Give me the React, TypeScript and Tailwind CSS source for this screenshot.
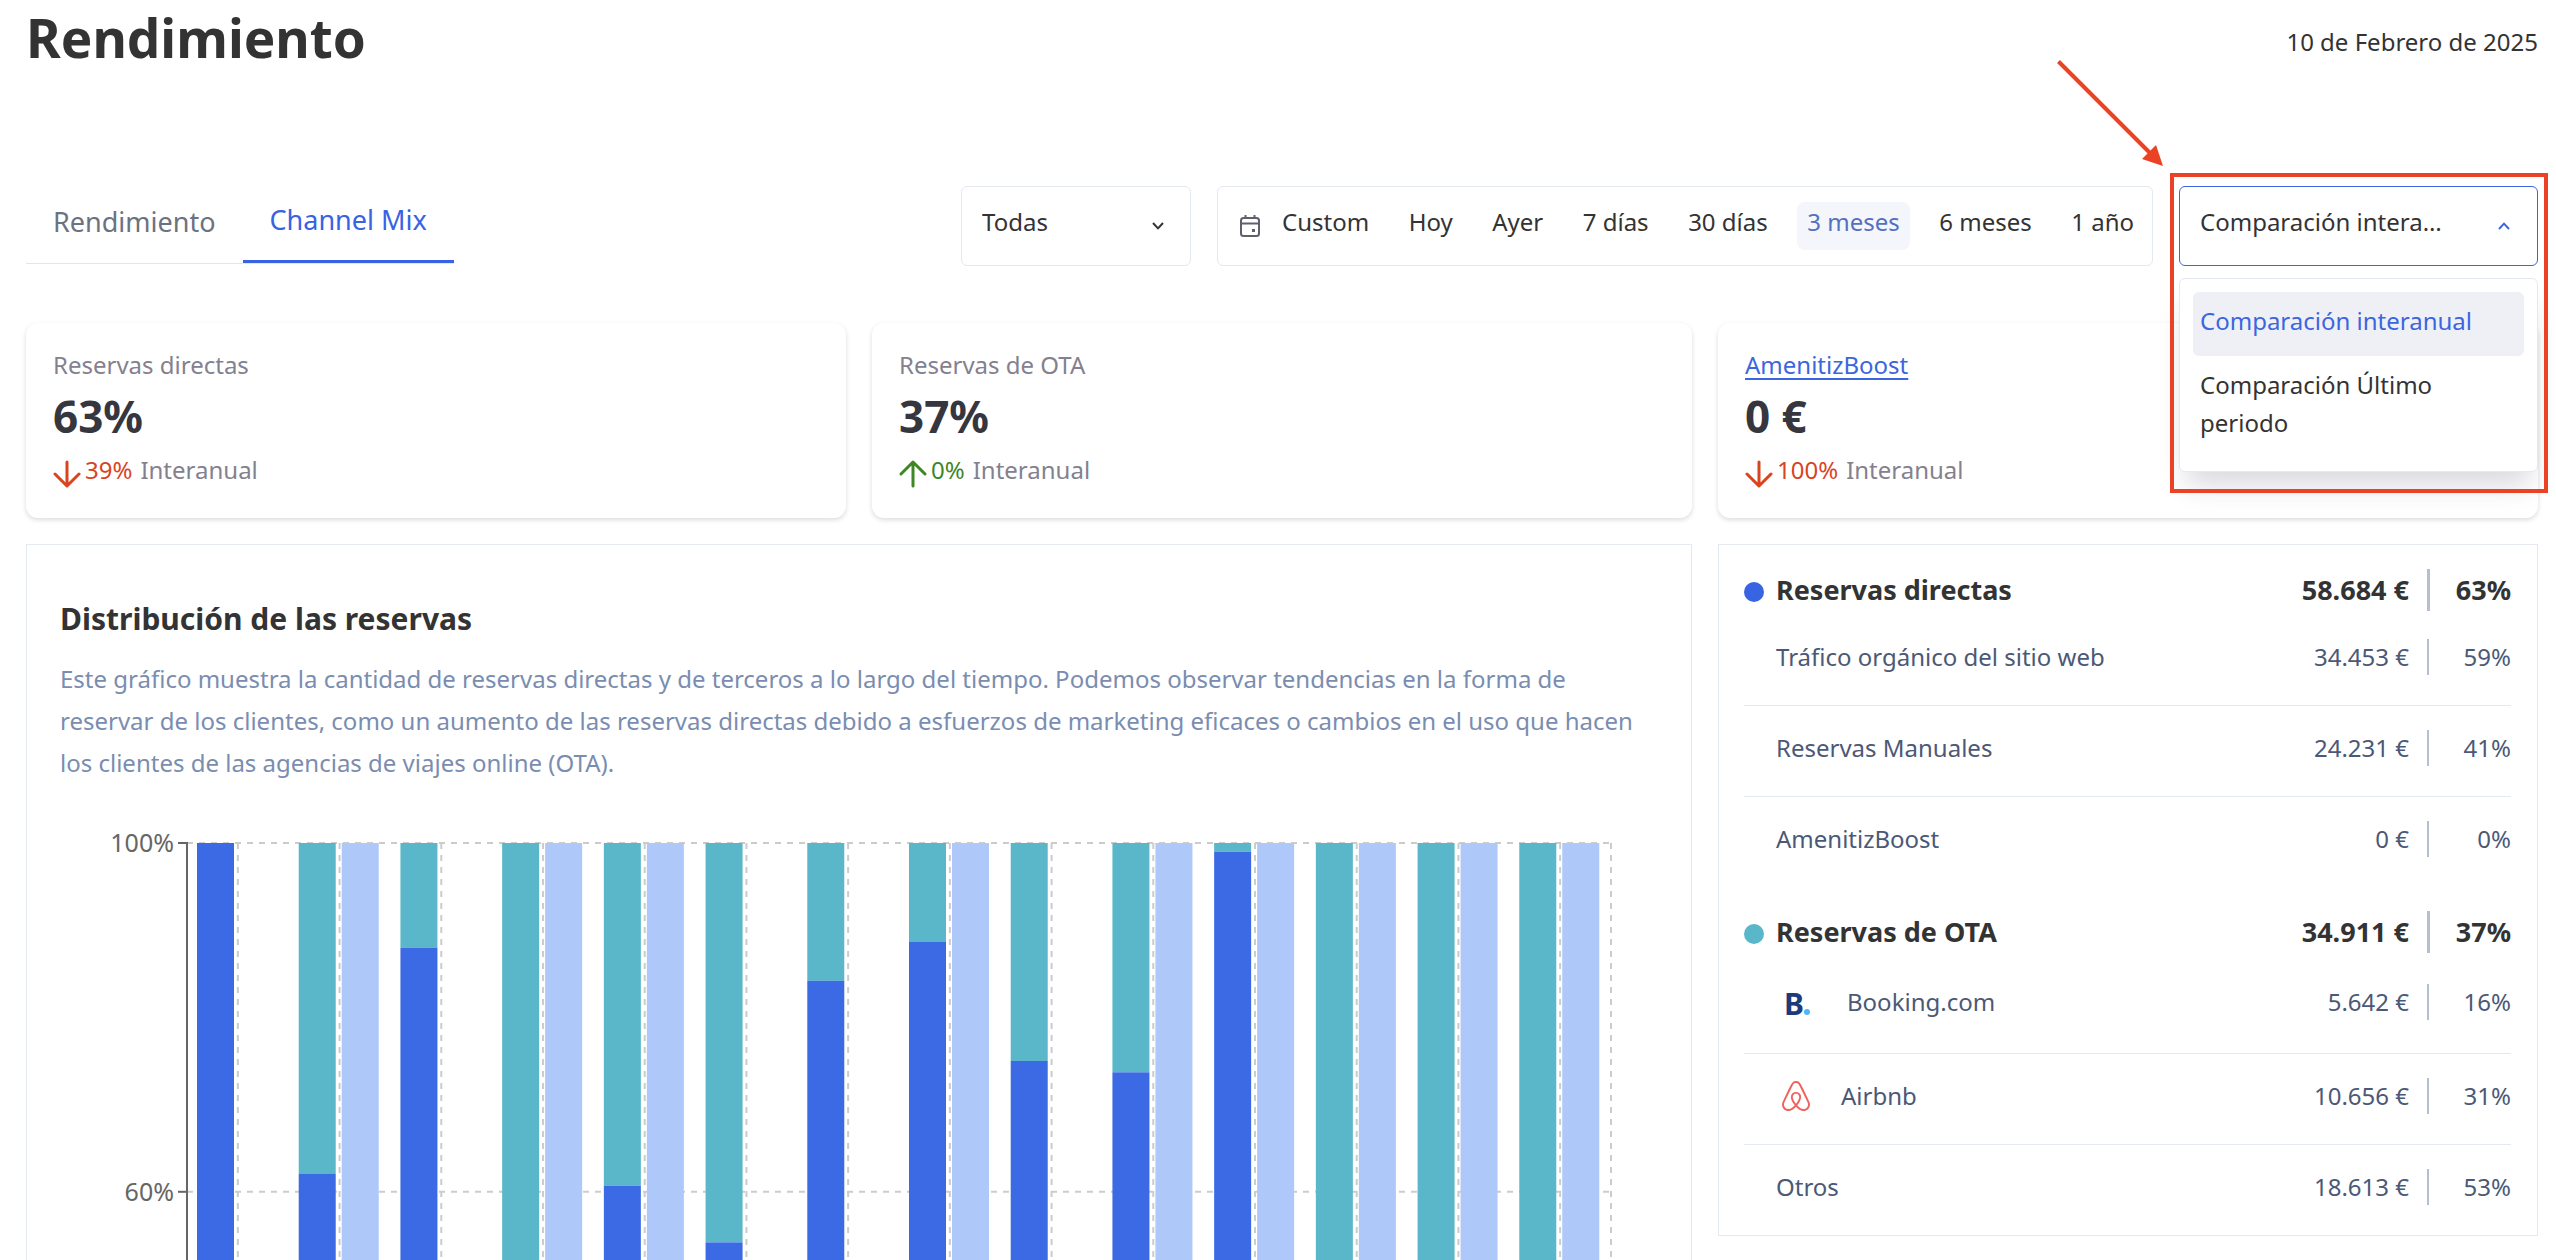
import { useState } from 'react';
import clsx from 'clsx';
import { SiAirbnb } from 'react-icons/si';

const ranges = ['Custom', 'Hoy', 'Ayer', '7 días', '30 días', '3 meses', '6 meses', '1 año'];
const comparisons = ['Comparación interanual', 'Comparación Último periodo'];

// direct: share of direct bookings, previous: whether last year's bar exists
const months = [
  { direct: 100, previous: false },
  { direct: 62.1, previous: true },
  { direct: 88, previous: false },
  { direct: 0, previous: true },
  { direct: 60.7, previous: true },
  { direct: 54.2, previous: false },
  { direct: 84.2, previous: false },
  { direct: 88.7, previous: true },
  { direct: 75, previous: false },
  { direct: 73.7, previous: true },
  { direct: 99, previous: true },
  { direct: 0, previous: true },
  { direct: 0, previous: true },
  { direct: 0, previous: true },
];

const groups = [
  {
    name: 'Reservas directas',
    amount: '58.684 €',
    share: '63%',
    dot: 'bg-[#3863e3]',
    rows: [
      { name: 'Tráfico orgánico del sitio web', amount: '34.453 €', share: '59%' },
      { name: 'Reservas Manuales', amount: '24.231 €', share: '41%' },
      { name: 'AmenitizBoost', amount: '0 €', share: '0%' },
    ],
  },
  {
    name: 'Reservas de OTA',
    amount: '34.911 €',
    share: '37%',
    dot: 'bg-[#59b7c9]',
    rows: [
      { name: 'Booking.com', amount: '5.642 €', share: '16%', logo: 'booking' },
      { name: 'Airbnb', amount: '10.656 €', share: '31%', logo: 'airbnb' },
      { name: 'Otros', amount: '18.613 €', share: '53%' },
    ],
  },
];

function Chevron({ up = false, className }: { up?: boolean; className?: string }) {
  return (
    <svg viewBox="0 0 12 8" className={clsx('w-3 h-2 shrink-0', className)} fill="none" stroke="currentColor" strokeWidth="2">
      <path d={up ? 'M1 7 L6 1.6 L11 7' : 'M1 1 L6 6.4 L11 1'} />
    </svg>
  );
}

function CalendarIcon() {
  return (
    <svg viewBox="0 0 20 22" className="w-5 h-[22px] shrink-0 text-[#615e6e]" fill="none" stroke="currentColor" strokeWidth="2">
      <rect x="1" y="3" width="18" height="18" rx="2.5" />
      <path d="M1 8.5 H19 M5.5 0 V3 M14.5 0 V3" />
      <rect x="12" y="14" width="3" height="3" fill="currentColor" stroke="none" />
    </svg>
  );
}

function TrendArrow({ up = false }: { up?: boolean }) {
  return (
    <svg viewBox="0 0 28 28" className="mt-1.5 w-7 h-7 shrink-0" fill="none" stroke="currentColor" strokeWidth="3" strokeLinecap="round" strokeLinejoin="round">
      <path d={up ? 'M14 26 V2 M2 14 L14 2 L26 14' : 'M14 2 V26 M2 14 L14 26 L26 14'} />
    </svg>
  );
}

function BookingLogo() {
  return (
    <svg viewBox="0 0 45 42" className="w-[45px] h-[42px] shrink-0" aria-hidden="true">
      <text x="8" y="34" fontSize="30" fontWeight="700" fill="#1d3b7c">B</text>
      <circle cx="31" cy="31" r="3" fill="#4fb4f8" />
    </svg>
  );
}

function StatCard({ label, href, value, change, up = false }: { label: string; href?: string; value: string; change: string; up?: boolean }) {
  return (
    <section className="rounded-xl bg-white px-[27px] pt-[26px] pb-[30px] shadow-[0_2px_5px_rgba(0,0,0,0.14)]">
      <p className="text-[24px] leading-8 text-[#84818f]">
        {href ? <a href={href} className="text-[#3b66e0] underline decoration-2 underline-offset-4">{label}</a> : label}
      </p>
      <p className="mt-[9px] text-[44px] leading-[52px] font-bold text-[#36363f]">{value}</p>
      <p className="mt-3 flex text-[24px] leading-8 text-[#84818f]">
        <span className={clsx('flex items-start gap-1', up ? 'text-[#3f8624]' : 'text-[#d9441f]')}>
          <TrendArrow up={up} />
          {change}
        </span>
        <span className="ml-2">Interanual</span>
      </p>
    </section>
  );
}

function ShareChart() {
  const top = 19;
  const left = 127;
  const right = 1551;
  const height = 872;
  const step = (right - left) / months.length;
  const ticks = [100, 60];
  const y = (value: number) => top + ((100 - value) / 100) * height;

  return (
    <svg viewBox="0 0 1598 900" className="mt-10 w-full" role="img" aria-label="Distribución de las reservas">
      <g stroke="#cccccc" strokeWidth="2" strokeDasharray="6 6">
        {ticks.map((t) => <line key={t} x1={left} x2={right} y1={y(t)} y2={y(t)} />)}
        {months.map((_, i) => <line key={i} x1={left + step * (i + 0.5)} x2={left + step * (i + 0.5)} y1={top} y2={y(0)} />)}
        <line x1={right} x2={right} y1={top} y2={y(0)} />
      </g>
      <line x1={left} x2={left} y1={top - 1} y2={y(0)} stroke="#666666" strokeWidth="2" />
      {ticks.map((t) => (
        <g key={t}>
          <line x1={left - 9} x2={left} y1={y(t)} y2={y(t)} stroke="#666666" strokeWidth="2" />
          <text x={left - 13} y={y(t) + 9} textAnchor="end" fontSize="25" fill="#666666">{t}%</text>
        </g>
      ))}
      {months.map((m, i) => {
        const x = left + step * i + 10;
        return (
          <g key={i}>
            <rect x={x} y={top} width="37" height={y(m.direct) - top} fill="#59b7c9" />
            <rect x={x} y={y(m.direct)} width="37" height={y(0) - y(m.direct)} fill="#3c6ae5" />
            {m.previous && <rect x={x + 43} y={top} width="37" height={height} fill="#adc8f9" />}
          </g>
        );
      })}
    </svg>
  );
}

function ShareCell({ share, strong = false }: { share: string; strong?: boolean }) {
  return (
    <span className="flex items-center justify-between pl-[18px]">
      <span className={clsx('bg-[#b4bfd4]', strong ? 'w-[3px] h-[42px]' : 'w-0.5 h-9')} />
      {share}
    </span>
  );
}

function Breakdown() {
  return (
    <section className="self-start border border-[#e4e8f0] pt-6 pr-[26px] pl-[25px]">
      <table className="w-full text-[24px] leading-9 text-[#4b5976]">
        {groups.map((group, g) => (
          <tbody key={group.name}>
            <tr className="text-[27px] leading-[42px] font-bold text-[#333333]">
              <th scope="rowgroup" className={clsx('p-0 pb-1 text-left font-bold', g > 0 && 'pt-6')}>
                <span className="flex items-center gap-3">
                  <span className={clsx('mt-1 size-5 rounded-full', group.dot)} />
                  {group.name}
                </span>
              </th>
              <td className={clsx('p-0 pb-1 text-right', g > 0 && 'pt-6')}>{group.amount}</td>
              <td className={clsx('w-[102px] p-0 pb-1', g > 0 && 'pt-6')}>
                <ShareCell share={group.share} strong />
              </td>
            </tr>
            {group.rows.map((row, i) => (
              <tr key={row.name} className={clsx(i < group.rows.length - 1 && 'border-b border-[#e4e8f0]')}>
                <th scope="row" className="p-0 pt-6 pb-[30px] pl-8 text-left font-normal">
                  <span className="flex items-center gap-[26px]">
                    {row.logo === 'booking' && <BookingLogo />}
                    {row.logo === 'airbnb' && (
                      <span className="flex w-[39px] justify-center">
                        <SiAirbnb className="size-[30px] text-[#f0625f]" />
                      </span>
                    )}
                    {row.name}
                  </span>
                </th>
                <td className="p-0 pt-6 pb-[30px] text-right">{row.amount}</td>
                <td className="p-0 pt-6 pb-[30px]">
                  <ShareCell share={row.share} />
                </td>
              </tr>
            ))}
          </tbody>
        ))}
      </table>
    </section>
  );
}

// Red frame and arrow that call out the comparison menu
function Callout() {
  return (
    <>
      <div className="pointer-events-none absolute -top-[13px] -left-[9px] z-20 h-[320px] w-[378px] border-4 border-[#eb4125]" />
      <svg viewBox="0 0 110 110" className="pointer-events-none absolute -top-[128px] -left-[124px] size-[110px]" aria-hidden="true">
        <path d="M3.5 3.5 L97 97" stroke="#eb4125" strokeWidth="4" />
        <path d="M108 108 L87 101 L101 87 Z" fill="#eb4125" />
      </svg>
    </>
  );
}

function ComparisonSelect() {
  const [open, setOpen] = useState(true);
  const [value, setValue] = useState(comparisons[0]);

  return (
    <div className="relative w-[359px] shrink-0">
      <button
        type="button"
        aria-haspopup="listbox"
        aria-expanded={open}
        onClick={() => setOpen(!open)}
        className="flex h-20 w-full items-center justify-between rounded-md border border-[#3b66e0] bg-white pr-[27px] pl-5 text-left"
      >
        <span className="w-[254px] truncate pb-2">{value}</span>
        <Chevron up={open} className="text-[#3b66e0]" />
      </button>
      {open && (
        <ul
          role="listbox"
          className="absolute top-[92px] left-0 z-10 w-full rounded-md border border-[#e4e8f0] bg-white p-[13px] leading-[38px] shadow-[0_20px_26px_-8px_rgba(40,40,70,0.18)]"
        >
          {comparisons.map((c) => (
            <li key={c} role="option" aria-selected={c === value}>
              <button
                type="button"
                onClick={() => setValue(c)}
                className={clsx('w-full rounded-md px-[7px] pt-2.5 pb-4 text-left', c === value && 'bg-[#eff0f6] text-[#3b66e0]')}
              >
                {c}
              </button>
            </li>
          ))}
        </ul>
      )}
      <Callout />
    </div>
  );
}

export default function App() {
  const [tab, setTab] = useState('Channel Mix');
  const [range, setRange] = useState('3 meses');

  return (
    <main className="h-screen overflow-hidden bg-white pt-1.5 pr-[18px] pl-[26px] font-['Noto_Sans',sans-serif] text-[24px] leading-8 text-[#333333]">
      <header className="flex items-center justify-between">
        <h1 className="text-[53px] leading-[64px] font-bold">Rendimiento</h1>
        <p className="pt-2">10 de Febrero de 2025</p>
      </header>

      <div className="mt-[116px] flex items-start justify-between">
        <nav className="flex h-[78px] border-b border-[#e4e6ea] text-[27px]">
          {['Rendimiento', 'Channel Mix'].map((t) => (
            <button
              key={t}
              type="button"
              onClick={() => setTab(t)}
              className={clsx('px-[27px] pb-1.5', t === tab ? 'border-b-3 border-[#3863e3] text-[#3863e3]' : 'text-[#6b7280]')}
            >
              {t}
            </button>
          ))}
        </nav>

        <div className="flex gap-[26px]">
          <div className="relative w-[230px] shrink-0">
            <select aria-label="Reservas" className="h-20 w-full appearance-none rounded-md border border-[#e4e8f0] bg-white pb-2 pl-5">
              <option>Todas</option>
            </select>
            <Chevron className="pointer-events-none absolute top-9 right-[27px]" />
          </div>

          <div className="flex h-20 w-[936px] items-center gap-3 rounded-md border border-[#e4e8f0] pr-2 pl-[22px]">
            <CalendarIcon />
            <div className="flex flex-1 justify-between">
              {ranges.map((r) => (
                <button
                  key={r}
                  type="button"
                  onClick={() => setRange(r)}
                  className={clsx('h-12 rounded-lg px-2.5 pb-2 whitespace-nowrap', r === range && 'bg-[#f5f6fc] text-[#5470c0]')}
                >
                  {r}
                </button>
              ))}
            </div>
          </div>

          <ComparisonSelect />
        </div>
      </div>

      <div className="mt-[57px] grid grid-cols-3 gap-[26px]">
        <StatCard label="Reservas directas" value="63%" change="39%" />
        <StatCard label="Reservas de OTA" value="37%" change="0%" up />
        <StatCard label="AmenitizBoost" href="#amenitizboost" value="0 €" change="100%" />

        <section className="col-span-2 border border-[#e4e8f0] px-[33px] pt-[54px] pb-10">
          <h2 className="text-[30px] leading-10 font-bold">Distribución de las reservas</h2>
          <p className="mt-[19px] leading-[42px] text-[#7a8db0]">
            Este gráfico muestra la cantidad de reservas directas y de terceros a lo largo del tiempo. Podemos observar
            tendencias en la forma de reservar de los clientes, como un aumento de las reservas directas debido a esfuerzos
            de marketing eficaces o cambios en el uso que hacen los clientes de las agencias de viajes online (OTA).
          </p>
          <ShareChart />
        </section>
        <Breakdown />
      </div>
    </main>
  );
}
